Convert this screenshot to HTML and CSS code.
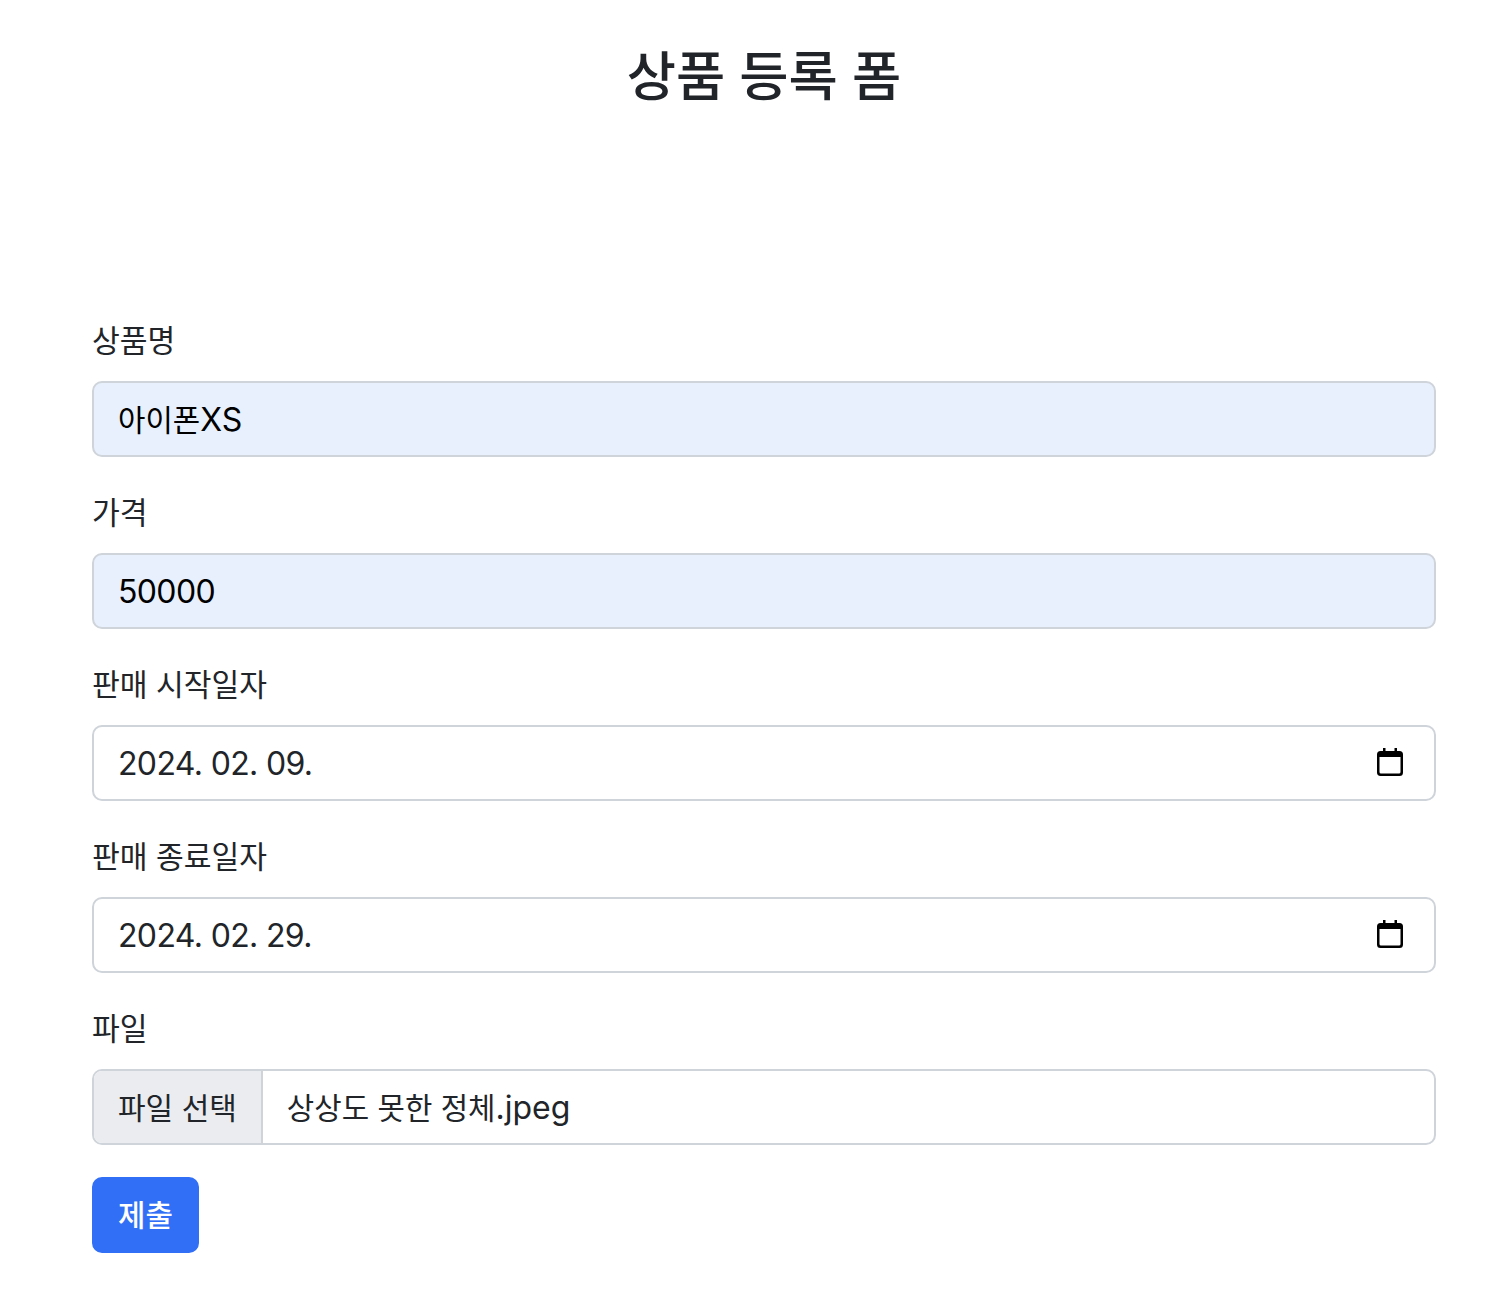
FILE: index.html
```html
<!DOCTYPE html>
<html lang="ko">
<head>
<meta charset="utf-8">
<title>상품 등록 폼</title>
<link rel="stylesheet" href="styles.css">
</head>
<body>
<main class="page">
  <h1 class="title">상품 등록 폼</h1>
  <form class="form">
    <div class="field">
      <div class="label">상품명</div>
      <div class="control autofill"><span class="kr">아이폰</span>XS</div>
    </div>
    <div class="field">
      <div class="label">가격</div>
      <div class="control autofill digits">50000</div>
    </div>
    <div class="field">
      <div class="label">판매 시작일자</div>
      <div class="control date">
        <span class="digits">2024. 02. 09.</span>
        <svg class="cal" viewBox="0 0 26 28" aria-hidden="true"><path d="M6 0h2.500v3h9V0H20v3h2.500A3.500 3.500 0 0 1 26 6.500v18a3.500 3.500 0 0 1-3.500 3.500h-19A3.500 3.500 0 0 1 0 24.500v-18A3.500 3.500 0 0 1 3.500 3H6zM2.500 9v15a1.500 1.500 0 0 0 1.500 1.500h18a1.500 1.500 0 0 0 1.500-1.500V9z" fill-rule="evenodd"/></svg>
      </div>
    </div>
    <div class="field">
      <div class="label">판매 종료일자</div>
      <div class="control date">
        <span class="digits">2024. 02. 29.</span>
        <svg class="cal" viewBox="0 0 26 28" aria-hidden="true"><path d="M6 0h2.500v3h9V0H20v3h2.500A3.500 3.500 0 0 1 26 6.500v18a3.500 3.500 0 0 1-3.500 3.500h-19A3.500 3.500 0 0 1 0 24.500v-18A3.500 3.500 0 0 1 3.500 3H6zM2.500 9v15a1.500 1.500 0 0 0 1.500 1.500h18a1.500 1.500 0 0 0 1.500-1.500V9z" fill-rule="evenodd"/></svg>
      </div>
    </div>
    <div class="field">
      <div class="label">파일</div>
      <div class="control file">
        <span class="file-btn">파일 선택</span>
        <span class="file-name"><span class="kr">상상도 못한 정체</span>.jpeg</span>
      </div>
    </div>
    <button class="submit" type="button">제출</button>
  </form>
</main>
</body>
</html>
```
FILE: styles.css
```css
* { box-sizing: border-box; }
html, body { margin: 0; background: #fff; }
body {
  font-family: Inter, "Noto Sans CJK KR", sans-serif;
  font-size: 32px;
  line-height: 48px;
  color: #212529;
}
.page { padding: 43px 66px 53px 92px; }
.title {
  margin: 0 0 207px;
  height: 67px;
  font-size: 53.500px;
  line-height: 67px;
  font-weight: 500;
  text-align: center;
}
.field { margin-bottom: 32px; }
.label {
  height: 48px;
  margin-bottom: 16px;
  font-size: 30.200px;
}
.kr { font-size: 29.800px; }
.digits { letter-spacing: -0.650px; }
.control {
  height: 76px;
  border: 2px solid #ced4da;
  border-radius: 10px;
  padding: 13px 24px 11px;
  background: #fff;
  white-space: nowrap;
}
.autofill { background: #e8f0fe; color: #000; }
.date {
  display: flex;
  align-items: center;
  justify-content: space-between;
  padding-right: 31px;
}
.cal { width: 26px; height: 28px; fill: #000; margin-top: -5px; }
.file { display: flex; padding: 0; overflow: hidden; }
.file-btn {
  padding: 13px 24px 11px;
  font-size: 30px;
  background: #eaecf0;
  border-right: 2px solid #ced4da;
  flex: none;
}
.file-name { padding: 13px 24px 11px; }
.submit {
  display: block;
  height: 76px;
  padding: 12px 24px;
  border: 2px solid #316ff6;
  border-radius: 10px;
  background: #316ff6;
  color: #fff;
  font: inherit;
  font-size: 29.800px;
  font-weight: 500;
  line-height: 48px;
}
```
